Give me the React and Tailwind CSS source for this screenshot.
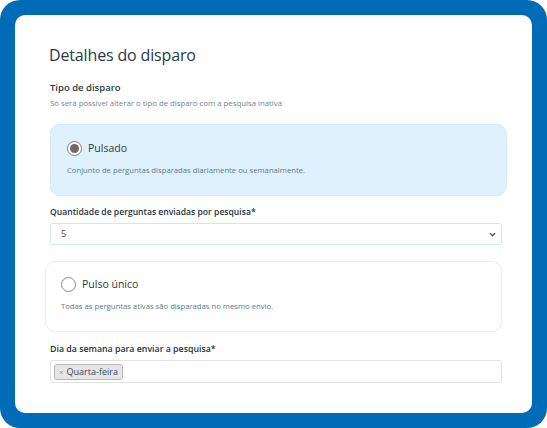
export default function App() {
  return (
    <div className="w-[547px] h-[428px] bg-white" style={{ fontFamily: '"Open Sans", "Liberation Sans", sans-serif' }}>
      <div className="h-full bg-[#006cb7] rounded-[20px] p-[15px]">
        <div className="h-full bg-white rounded-[10px] pt-[28px] pl-[35px] pr-[30px]">
          <h1 className="text-[16px] leading-[24px] tracking-[-0.15px] text-[#2c3946] -ml-[1px]">Detalhes do disparo</h1>

          <h2 className="mt-[13px] text-[9.5px] leading-[16px] font-semibold text-[#2c3946]">Tipo de disparo</h2>
          <p className="mt-[1px] text-[7.8px] leading-[12px] text-[#6f8596]">
            Só será possível alterar o tipo de disparo com a pesquisa inativa
          </p>

          {/* Pulsado - selected */}
          <div className="mt-[15px] -mr-[5px] h-[72px] rounded-[10px] bg-[#dff1fc] border border-[#d3e9f8] pl-[16px] pt-[15px]">
            <div className="flex items-center gap-[6px]">
              <span className="w-[15px] h-[15px] rounded-full border-[1.5px] border-[#7d7d7d] bg-white flex items-center justify-center">
                <span className="w-[9px] h-[9px] rounded-full bg-[#6b6b6b]" />
              </span>
              <span className="text-[10.5px] leading-[16px] text-[#2c3946]">Pulsado</span>
            </div>
            <p className="mt-[8px] text-[7.7px] leading-[12px] text-[#5a7b92]">
              Conjunto de perguntas disparadas diariamente ou semanalmente.
            </p>
          </div>

          <label className="block mt-[9px] text-[8.6px] leading-[15px] font-semibold text-[#25323e]">
            Quantidade de perguntas enviadas por pesquisa*
          </label>
          <div className="mt-[3px] h-[22px] border border-[#cfe6f7] rounded-[3px] flex items-center justify-between pl-[10px] pr-[4px]">
            <span className="text-[9px] text-[#3a4752]">5</span>
            <svg width="9" height="9" viewBox="0 0 10 10" fill="none">
              <path d="M2.5 4 L5 6.5 L7.5 4" stroke="#555" strokeWidth="1.5" strokeLinecap="round" strokeLinejoin="round" />
            </svg>
          </div>

          {/* Pulso único */}
          <div className="mt-[16px] -ml-[5px] h-[71px] rounded-[10px] bg-white border border-[#ececec] pl-[15px] pt-[14px]">
            <div className="flex items-center gap-[6px]">
              <span className="w-[15px] h-[15px] rounded-full border border-[#8a8a8a] bg-white" />
              <span className="text-[10.5px] leading-[16px] text-[#2c3946]">Pulso único</span>
            </div>
            <p className="mt-[8px] text-[7.7px] leading-[12px] text-[#5a7b92]">
              Todas as perguntas ativas são disparadas no mesmo envio.
            </p>
          </div>

          <label className="block mt-[10px] text-[8.8px] leading-[15px] font-semibold text-[#25323e]">
            Dia da semana para enviar a pesquisa*
          </label>
          <div className="mt-[3px] h-[23px] border border-[#e2e2e2] rounded-[3px] flex items-center pl-[3px]">
            <span className="h-[16px] flex items-center gap-[3px] px-[4px] bg-[#e6e6e6] border border-[#b9b9b9] rounded-[3px]">
              <span className="text-[8px] leading-none text-[#999]">×</span>
              <span className="text-[9px] leading-none text-[#3a4752]">Quarta-feira</span>
            </span>
          </div>
        </div>
      </div>
    </div>
  );
}
